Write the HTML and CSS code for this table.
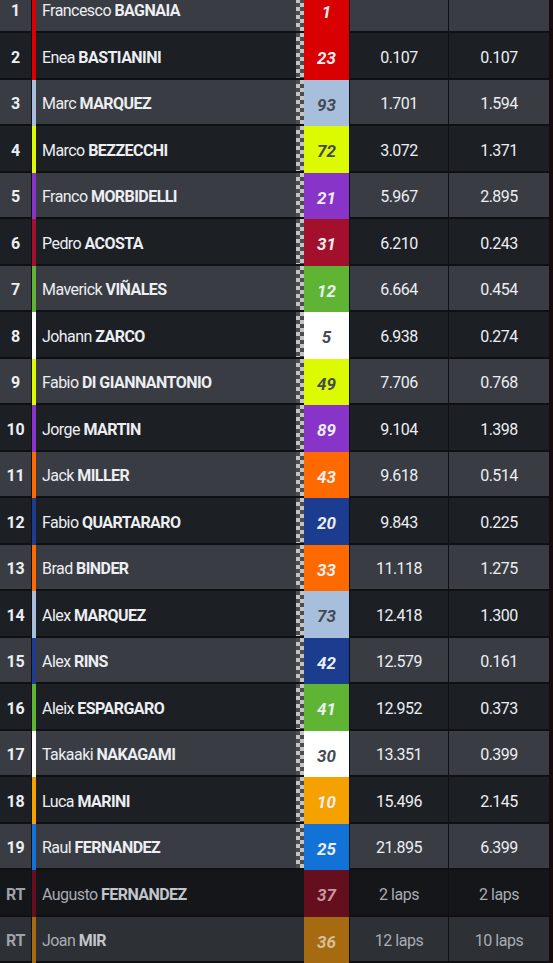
FILE: index.html
```html
<!DOCTYPE html>
<html>
<head>
<meta charset="utf-8">
<link rel="stylesheet" href="styles.css">
</head>
<body>
<div class="table">
  <div class="row odd"><div class="pos">1</div><div class="sep"></div><div class="stripe t-red"></div><div class="name">Francesco <b>BAGNAIA</b></div><div class="flag"></div><div class="num t-red">1</div><div class="gap"></div><div class="gap g2"></div><div class="edge"></div></div>
  <div class="row even"><div class="pos">2</div><div class="sep"></div><div class="stripe t-red"></div><div class="name">Enea <b>BASTIANINI</b></div><div class="flag"></div><div class="num t-red">23</div><div class="gap">0.107</div><div class="gap g2">0.107</div><div class="edge"></div></div>
  <div class="row odd"><div class="pos">3</div><div class="sep"></div><div class="stripe t-lblue"></div><div class="name">Marc <b>MARQUEZ</b></div><div class="flag"></div><div class="num t-lblue">93</div><div class="gap">1.701</div><div class="gap g2">1.594</div><div class="edge"></div></div>
  <div class="row even"><div class="pos">4</div><div class="sep"></div><div class="stripe t-yellow"></div><div class="name">Marco <b>BEZZECCHI</b></div><div class="flag"></div><div class="num t-yellow">72</div><div class="gap">3.072</div><div class="gap g2">1.371</div><div class="edge"></div></div>
  <div class="row odd"><div class="pos">5</div><div class="sep"></div><div class="stripe t-purple"></div><div class="name">Franco <b>MORBIDELLI</b></div><div class="flag"></div><div class="num t-purple">21</div><div class="gap">5.967</div><div class="gap g2">2.895</div><div class="edge"></div></div>
  <div class="row even"><div class="pos">6</div><div class="sep"></div><div class="stripe t-crimson"></div><div class="name">Pedro <b>ACOSTA</b></div><div class="flag"></div><div class="num t-crimson">31</div><div class="gap">6.210</div><div class="gap g2">0.243</div><div class="edge"></div></div>
  <div class="row odd"><div class="pos">7</div><div class="sep"></div><div class="stripe t-green"></div><div class="name">Maverick <b>VIÑALES</b></div><div class="flag"></div><div class="num t-green">12</div><div class="gap">6.664</div><div class="gap g2">0.454</div><div class="edge"></div></div>
  <div class="row even"><div class="pos">8</div><div class="sep"></div><div class="stripe t-white"></div><div class="name">Johann <b>ZARCO</b></div><div class="flag"></div><div class="num t-white">5</div><div class="gap">6.938</div><div class="gap g2">0.274</div><div class="edge"></div></div>
  <div class="row odd"><div class="pos">9</div><div class="sep"></div><div class="stripe t-yellow"></div><div class="name">Fabio <b>DI GIANNANTONIO</b></div><div class="flag"></div><div class="num t-yellow">49</div><div class="gap">7.706</div><div class="gap g2">0.768</div><div class="edge"></div></div>
  <div class="row even"><div class="pos">10</div><div class="sep"></div><div class="stripe t-purple"></div><div class="name">Jorge <b>MARTIN</b></div><div class="flag"></div><div class="num t-purple">89</div><div class="gap">9.104</div><div class="gap g2">1.398</div><div class="edge"></div></div>
  <div class="row odd"><div class="pos">11</div><div class="sep"></div><div class="stripe t-orange"></div><div class="name">Jack <b>MILLER</b></div><div class="flag"></div><div class="num t-orange">43</div><div class="gap">9.618</div><div class="gap g2">0.514</div><div class="edge"></div></div>
  <div class="row even"><div class="pos">12</div><div class="sep"></div><div class="stripe t-navy"></div><div class="name">Fabio <b>QUARTARARO</b></div><div class="flag"></div><div class="num t-navy">20</div><div class="gap">9.843</div><div class="gap g2">0.225</div><div class="edge"></div></div>
  <div class="row odd"><div class="pos">13</div><div class="sep"></div><div class="stripe t-orange"></div><div class="name">Brad <b>BINDER</b></div><div class="flag"></div><div class="num t-orange">33</div><div class="gap">11.118</div><div class="gap g2">1.275</div><div class="edge"></div></div>
  <div class="row even"><div class="pos">14</div><div class="sep"></div><div class="stripe t-lblue"></div><div class="name">Alex <b>MARQUEZ</b></div><div class="flag"></div><div class="num t-lblue">73</div><div class="gap">12.418</div><div class="gap g2">1.300</div><div class="edge"></div></div>
  <div class="row odd"><div class="pos">15</div><div class="sep"></div><div class="stripe t-navy"></div><div class="name">Alex <b>RINS</b></div><div class="flag"></div><div class="num t-navy">42</div><div class="gap">12.579</div><div class="gap g2">0.161</div><div class="edge"></div></div>
  <div class="row even"><div class="pos">16</div><div class="sep"></div><div class="stripe t-green"></div><div class="name">Aleix <b>ESPARGARO</b></div><div class="flag"></div><div class="num t-green">41</div><div class="gap">12.952</div><div class="gap g2">0.373</div><div class="edge"></div></div>
  <div class="row odd"><div class="pos">17</div><div class="sep"></div><div class="stripe t-white"></div><div class="name">Takaaki <b>NAKAGAMI</b></div><div class="flag"></div><div class="num t-white">30</div><div class="gap">13.351</div><div class="gap g2">0.399</div><div class="edge"></div></div>
  <div class="row even"><div class="pos">18</div><div class="sep"></div><div class="stripe t-amber"></div><div class="name">Luca <b>MARINI</b></div><div class="flag"></div><div class="num t-amber">10</div><div class="gap">15.496</div><div class="gap g2">2.145</div><div class="edge"></div></div>
  <div class="row odd"><div class="pos">19</div><div class="sep"></div><div class="stripe t-blue"></div><div class="name">Raul <b>FERNANDEZ</b></div><div class="flag"></div><div class="num t-blue">25</div><div class="gap">21.895</div><div class="gap g2">6.399</div><div class="edge"></div></div>
  <div class="row rt rt-a"><div class="pos">RT</div><div class="sep"></div><div class="stripe t-maroon"></div><div class="name">Augusto <b>FERNANDEZ</b></div><div class="noflag"></div><div class="num t-maroon">37</div><div class="gap">2 laps</div><div class="gap g2">2 laps</div><div class="edge"></div></div>
  <div class="row rt rt-b"><div class="pos">RT</div><div class="sep"></div><div class="stripe t-bronze"></div><div class="name">Joan <b>MIR</b></div><div class="noflag"></div><div class="num t-bronze">36</div><div class="gap">12 laps</div><div class="gap g2">10 laps</div><div class="edge"></div></div>
</div>
</body>
</html>
```

FILE: styles.css
```css
* { box-sizing: border-box; }
html, body { margin: 0; padding: 0; background: #0e1013; }
body { width: 553px; height: 963px; overflow: hidden; font-family: Roboto, "Noto Sans", sans-serif; }
.table { display: flex; flex-direction: column; margin-top: -13.5px; }
.row { display: flex; height: 46.5px; color: #eceef2; font-size: 16px; }
.row > div { height: 100%; }
.pos, .name, .flag, .noflag, .gap, .sep {
  border-bottom: 2px solid #0e1013;
}
.odd .pos, .odd .name, .odd .flag, .odd .gap { background: #393c43; }
.even .pos, .even .name, .even .flag, .even .gap { background: #1c1f24; }
.rt-a .pos, .rt-a .name, .rt-a .noflag, .rt-a .gap { background: #141619; }
.rt-b .pos, .rt-b .name, .rt-b .noflag, .rt-b .gap { background: #2d3035; }
.pos { width: 31px; display: flex; align-items: center; justify-content: center; font-weight: 700; padding-top: 4px; letter-spacing: -0.3px; }
.sep { width: 1px; background: #0e1013; }
.stripe { width: 4px; }
.name { width: 260px; display: flex; align-items: center; padding-left: 6px; padding-top: 4px; white-space: pre; letter-spacing: -0.55px; }
.name b { font-weight: 700; }
.flag { width: 8px; position: relative; }
.flag::after {
  content: ""; position: absolute; left: 0; top: 0; width: 8px; height: 100%;
  background: conic-gradient(#c4c4c4 25%, #4a4c50 0 50%, #c4c4c4 0 75%, #4a4c50 0);
  background-size: 8px 8px;
}
.noflag { width: 8px; }
.num { width: 45px; display: flex; align-items: center; justify-content: center; font-weight: 700; font-style: italic; padding-top: 4px; font-size: 17px; }
.gap { width: 99px; border-left: 1px solid #0e1013; display: flex; align-items: center; justify-content: center; padding-top: 4px; letter-spacing: -0.5px; }
.gap.g2 { width: 101px; }
.edge { width: 4px; background: #170b0d; }

.t-red { background: #d80000; }
.t-lblue { background: #a8bedd; color: #454952; }
.t-yellow { background: #dcfa00; color: #454952; }
.t-purple { background: #8834c8; }
.t-crimson { background: #a3102c; }
.t-green { background: #60b434; }
.t-white { background: #ffffff; color: #454952; }
.t-orange { background: #ff6a00; }
.t-navy { background: #1b3c8f; }
.t-amber { background: #f5a200; }
.t-blue { background: #1272d8; }
.t-maroon { background: #650e1d; color: #c49aa2; }
.t-bronze { background: #a66a10; color: #d6bf9a; }

.rt { color: #a8acb3; }
.rt .name b { color: #c2c5ca; }
.rt .pos { color: #9ea2a9; }
```
